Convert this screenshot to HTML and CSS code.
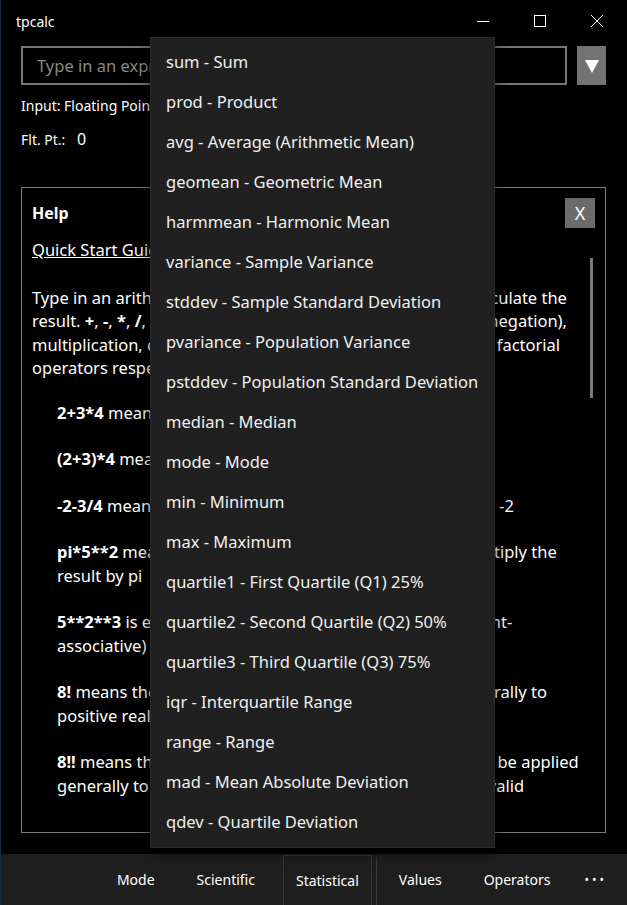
FILE: index.html
```html
<!DOCTYPE html>
<html lang="en">
<head>
<meta charset="utf-8">
<title>tpcalc</title>
<link rel="stylesheet" href="styles.css">
</head>
<body>
<div class="window">
  <header class="titlebar">
    <span class="title">tpcalc</span>
    <div class="controls">
      <span class="ctl"><svg width="14" height="14" viewBox="0 0 14 14"><path d="M1 7.5H13" stroke="#fff" stroke-width="1"/></svg></span>
      <span class="ctl"><svg width="14" height="14" viewBox="0 0 14 14"><rect x="1.5" y="1.5" width="11" height="11" fill="none" stroke="#fff" stroke-width="1"/></svg></span>
      <span class="ctl"><svg width="14" height="14" viewBox="0 0 14 14"><path d="M1 1L13 13M13 1L1 13" stroke="#fff" stroke-width="1"/></svg></span>
    </div>
  </header>

  <main class="content">
    <div class="input-row">
      <div class="expr">Type in an expression and press Enter</div>
      <button class="drop"><svg width="16" height="16" viewBox="0 0 16 16"><path d="M1 2H15L8 15Z" fill="#fff"/></svg></button>
    </div>
    <div class="mode-line">Input: Floating Point Number, Output: Floating Point Number</div>
    <div class="result-line"><span class="res-label">Flt. Pt.:</span><span class="res-value">0</span></div>

    <section class="help">
      <div class="help-head">
        <span class="help-title">Help</span>
        <button class="help-close">X</button>
      </div>
      <div class="help-body">
        <a class="guide">Quick Start Guide</a>
        <p class="para">
          <span class="ln">Type in an arithmetic expression in a box, press Enter to calculate the</span>
          <span class="ln">result. <b>+</b>, <b>-</b>, <b>*</b>, <b>/</b>, <b>**</b>, <b>!</b>, and <b>!!</b> are the addition, subtraction (or negation),</span>
          <span class="ln">multiplication, division exponentiation, factorial and double factorial</span>
          <span class="ln">operators respectively.</span>
        </p>
        <p class="ex"><b>2+3*4</b> means 2+(3*4) = 14</p>
        <p class="ex"><b>(2+3)*4</b> means (2+3)*4 = 20</p>
        <p class="ex"><b>-2-3/4</b> means (-2)-(3/4) = -2.75 since negation binds to 2&emsp;-2</p>
        <p class="ex"><b>pi*5**2</b> means raise 5 to the power of two and then multiply the result by pi</p>
        <p class="ex"><b>5**2**3</b> is equivalent to 5**(2**3) (exponentiation is right-associative)</p>
        <p class="ex"><b>8!</b> means the factorial of 8. Factorial can be applied generally to positive real numbers</p>
        <p class="ex"><b>8!!</b> means the double factorial of 8; double factorial can't be applied generally to real numbers; but the positive integers are valid</p>
      </div>
      <div class="scrollbar"></div>
    </section>
  </main>

  <footer class="appbar">
    <button class="ab ab-mode">Mode</button>
    <button class="ab">Scientific</button>
    <button class="ab ab-active">Statistical</button>
    <span class="ab-sep"></span>
    <button class="ab ab-values">Values</button>
    <button class="ab">Operators</button>
    <button class="ab ab-more">&#8226;&#8226;&#8226;</button>
  </footer>

  <ul class="menu">
    <li>sum - Sum</li>
    <li>prod - Product</li>
    <li>avg - Average (Arithmetic Mean)</li>
    <li>geomean - Geometric Mean</li>
    <li>harmmean - Harmonic Mean</li>
    <li>variance - Sample Variance</li>
    <li>stddev - Sample Standard Deviation</li>
    <li>pvariance - Population Variance</li>
    <li>pstddev - Population Standard Deviation</li>
    <li>median - Median</li>
    <li>mode - Mode</li>
    <li>min - Minimum</li>
    <li>max - Maximum</li>
    <li>quartile1 - First Quartile (Q1) 25%</li>
    <li>quartile2 - Second Quartile (Q2) 50%</li>
    <li>quartile3 - Third Quartile (Q3) 75%</li>
    <li>iqr - Interquartile Range</li>
    <li>range - Range</li>
    <li>mad - Mean Absolute Deviation</li>
    <li>qdev - Quartile Deviation</li>
  </ul>
</div>
</body>
</html>
```

FILE: styles.css
```css
* { box-sizing: border-box; }
html, body { margin: 0; padding: 0; background: #000; }
body {
  width: 627px;
  height: 905px;
  overflow: hidden;
  font-family: "Noto Sans", "Open Sans", sans-serif;
  color: #fff;
}
button { font-family: inherit; color: inherit; border: none; cursor: default; }

.window {
  position: relative;
  width: 627px;
  height: 905px;
  display: flex;
  flex-direction: column;
  background: #000;
  border-left: 1px solid #1c2a3a;
}

.titlebar {
  height: 42px;
  flex: none;
  display: flex;
  align-items: center;
  justify-content: space-between;
  padding-left: 15px;
  padding-right: 2px;
}
.title { font-size: 14px; }
.controls { display: flex; height: 100%; }
.ctl {
  width: 57px;
  display: flex;
  align-items: center;
  justify-content: center;
}

.content {
  flex: 1;
  display: flex;
  flex-direction: column;
  padding: 4px 21px 21px 20px;
  min-height: 0;
}

.input-row { display: flex; gap: 10px; height: 39px; flex: none; }
.expr {
  flex: 1;
  border: 2px solid #767676;
  color: #8a8a8a;
  font-size: 16.5px;
  padding: 0 14px;
  display: flex;
  align-items: center;
  white-space: nowrap;
  overflow: hidden;
}
.drop {
  width: 29px;
  background: #737373;
  display: flex;
  align-items: center;
  justify-content: center;
  padding: 0;
}

.mode-line { font-size: 14px; margin-top: 11px; line-height: 20px; white-space: nowrap; }
.result-line { display: flex; align-items: center; margin-top: 12px; height: 22px; }
.res-label { font-size: 14px; width: 56px; }
.res-value { font-size: 16px; }

.help {
  position: relative;
  flex: 1;
  margin-top: 37px;
  border: 1px solid #7a7a7a;
  padding: 10px 10px 0 10px;
  display: flex;
  flex-direction: column;
  overflow: hidden;
}
.help-head { display: flex; justify-content: space-between; align-items: center; height: 30px; }
.help-title { font-weight: 700; font-size: 16px; }
.help-close {
  width: 30px;
  height: 30px;
  background: #6b6b6b;
  font-size: 18px;
  padding: 0;
}
.help-body { font-size: 16.5px; line-height: 23.5px; padding-right: 12px; }
.guide { display: block; text-decoration: underline; margin-top: 10px; }
.para { margin: 24px 0 0 0; }
.ln { display: block; white-space: nowrap; }
.ex { margin: 23px 0 0 25px; }
.para + .ex { margin-top: 21px; }
.ex b, .para b { font-weight: 700; }

.scrollbar {
  position: absolute;
  right: 12px;
  top: 70px;
  width: 3px;
  height: 140px;
  background: #7a7a7a;
}

.appbar {
  flex: none;
  height: 51px;
  background: #1f1f1f;
  display: flex;
  justify-content: flex-end;
  align-items: stretch;
}
.ab {
  background: transparent;
  font-size: 14px;
  padding: 0 20px;
}
.ab-mode { padding: 0 22px 0 20px; }
.ab-active {
  padding: 0 12px;
  margin: 1px 0 0 8px;
  border: 1px solid #343434;
  border-bottom: none;
}
.ab-sep {
  width: 1px;
  background: #3a3a3a;
  margin: 3px 2px 0 4px;
}
.ab-values { padding: 0 22px 0 20px; }
.ab-more { padding: 0 20px 0 14px; font-size: 12px; letter-spacing: 3px; }

.menu {
  position: absolute;
  left: 149px;
  top: 37px;
  width: 345px;
  height: 811px;
  margin: 0;
  padding: 3px 0 8px 0;
  list-style: none;
  background: #202020;
  border: 1px solid #2a2a2a;
  box-shadow: 0 4px 16px rgba(0,0,0,0.6);
}
.menu li {
  height: 40px;
  display: flex;
  align-items: center;
  padding-left: 15px;
  font-size: 16.5px;
  color: #f0f0f0;
  white-space: nowrap;
}
```
